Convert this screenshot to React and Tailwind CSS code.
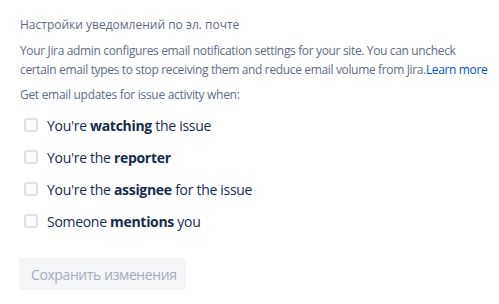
const options = [
  { id: 'watching', pre: "You're ", bold: 'watching', post: ' the issue' },
  { id: 'reporter', pre: "You're the ", bold: 'reporter', post: '' },
  { id: 'assignee', pre: "You're the ", bold: 'assignee', post: ' for the issue' },
  { id: 'mentions', pre: 'Someone ', bold: 'mentions', post: ' you' },
]

export default function App() {
  return (
    <div
      className="w-[499px] h-[304px] bg-white px-5 pt-[16px]"
      style={{ fontFamily: '"Open Sans", "Noto Sans", sans-serif' }}
    >
      <h2 className="text-[12px] leading-[18px] font-medium text-[#5e6c84]">
        Настройки уведомлений по эл. почте
      </h2>

      <p className="mt-[7px] text-[12px] leading-[19px] text-[#5e6c84] tracking-[-0.35px] whitespace-nowrap">
        Your Jira admin configures email notification settings for your site. You can uncheck
        <br />
        certain email types to stop receiving them and reduce email volume from Jira.
        <a href="#" className="text-[#0052cc]">Learn more</a>
      </p>

      <p className="mt-[6px] text-[12px] leading-[19px] text-[#5e6c84] tracking-[-0.3px]">
        Get email updates for issue activity when:
      </p>

      <ul className="mt-[11px] flex flex-col gap-[12px]">
        {options.map((o) => (
          <li key={o.id} className="flex items-center h-[20px]">
            <label className="flex items-center cursor-pointer">
              <span className="ml-1 w-[14px] h-[14px] rounded-[3px] border-2 border-[#dfe1e6] bg-[#fafbfc]" />
              <span className="ml-[9px] text-[14px] text-[#172b4d] tracking-[-0.3px]">
                {o.pre}
                <strong className="font-bold">{o.bold}</strong>
                {o.post}
              </span>
            </label>
          </li>
        ))}
      </ul>

      <button
        disabled
        className="mt-[27px] h-[32px] w-[167px] -ml-px rounded-[3px] bg-[#f4f5f7] text-[14px] text-[#a5adba] text-left pl-3 tracking-[-0.4px]"
      >
        Сохранить изменения
      </button>
    </div>
  )
}
